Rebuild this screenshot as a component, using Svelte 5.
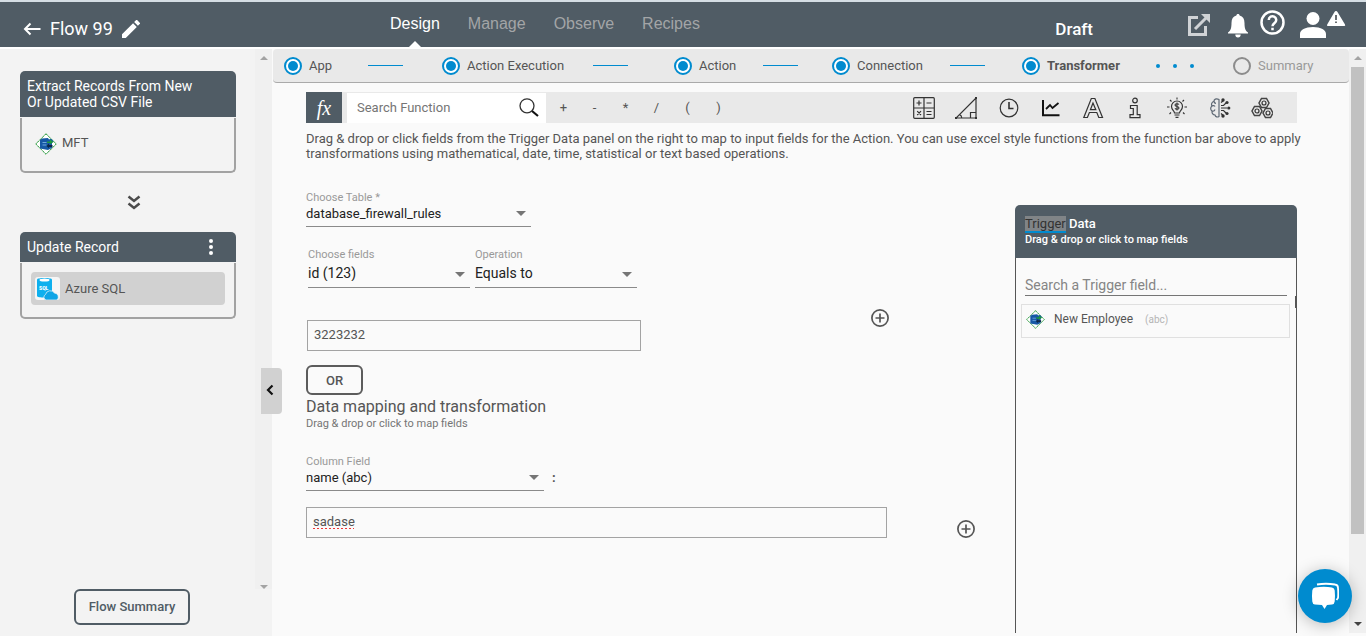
<script lang="ts">
  interface Step {
    label: string;
    state: "done" | "current" | "pending";
  }

  const tabs = ["Design", "Manage", "Observe", "Recipes"];
  const operators = ["+", "-", "*", "/", "(", ")"];
  const functionGroups = ["Math", "Trigonometry", "Date and time", "Statistics", "Text", "Information", "Finance", "Logic", "Engineering"];

  const steps: Step[] = [
    { label: "App", state: "done" },
    { label: "Action Execution", state: "done" },
    { label: "Action", state: "done" },
    { label: "Connection", state: "done" },
    { label: "Transformer", state: "current" },
    { label: "Summary", state: "pending" },
  ];

  let activeTab = $state("Design");
  let functionQuery = $state("");
  let triggerQuery = $state("");
  let table = $state("database_firewall_rules");
  let field = $state("id (123)");
  let operation = $state("Equals to");
  let fieldValue = $state("3223232");
  let column = $state("name (abc)");
  let columnValue = $state("sadase");
</script>

{#snippet mftIcon(size: number)}
  <svg width={size} height={size} viewBox="0 0 22 22" aria-hidden="true">
    <path d="M11 .8 21.2 11 11 21.2.8 11z" fill="#fff" stroke="#7cc587" />
    <path d="M11 .8 21.2 11 11 21.2.8 11z" fill="none" stroke="#3f9f50" stroke-dasharray="2 1.500" />
    <path d="M5 7 7 5.500 13 5l1 1.500 2-.8L18.500 8l-1.500 2v5l-4 2-8-1.500z" fill="#1658a5" />
    <path d="M7.500 9.500h4M7.500 12h4" stroke="#6fa8dd" />
    <path d="M12 8.500h3V6.500L18.500 9 15 11.300V10h-3z" fill="#1f9a3d" />
    <path d="M17.500 12H14v-1.500L11.500 13l2.500 2.200V14h3.500z" fill="#0c2748" />
  </svg>
{/snippet}

{#snippet plusIcon()}
  <svg width="18" height="18" viewBox="0 0 18 18" fill="none" stroke="#555" stroke-width="1.700" aria-hidden="true">
    <circle cx="9" cy="9" r="8.100" />
    <path d="M9 4.500v9M4.500 9h9" />
  </svg>
{/snippet}

{#snippet groupIcon(name: string)}
  <svg width="22" height="22" viewBox="0 0 22 22" fill="none" stroke="#333" stroke-width="1.200" aria-hidden="true">
    {#if name === "Math"}
      <rect x=".7" y=".7" width="20.600" height="20.600" rx="1" />
      <path d="M11 1v20M1 11h20M3.500 6h5M6 3.500v5M13.500 6h5M4.200 14.200l3.800 3.800M8 14.200 4.200 18M13.500 14.500h5M13.500 17.500h5" />
    {:else if name === "Trigonometry"}
      <path d="M21 1v20H1zM15.500 21v-5.500H21M4.500 17.500c1.600.8 2.300 2 2.200 3.500" />
      <path d="M20 0h2v2h-2zM20 20h2v2h-2zM0 20h2v2H0z" fill="#333" stroke="none" />
    {:else if name === "Date and time"}
      <circle cx="11" cy="11" r="8.800" />
      <path d="M11 5v6.500h4.500" stroke-width="1.600" />
    {:else if name === "Statistics"}
      <path d="M3 3v15.200h16.500" stroke="#111" stroke-width="2" />
      <path d="m6 12 4-4 2.500 3 6-5" stroke="#111" stroke-width="1.800" />
    {:else if name === "Text"}
      <path d="M9.300 1.500h3.600L20.500 20.500h-3.700l-2-5H7.400l-2 5H1.800zM11 6l-2.600 6.700h5.400z" />
    {:else if name === "Information"}
      <circle cx="11" cy="3.500" r="2.300" />
      <path d="M6.500 8.500h6.700v9.200H16v3H6v-3h3.300v-6.200H6.500z" />
    {:else if name === "Finance"}
      <path d="M8.500 16c0-2-3-3-3-6.500a5.500 5.500 0 0 1 11 0c0 3.500-3 4.500-3 6.500zM8.500 18h5M9.500 20.300h3" />
      <path d="M13 7.500c-.8-1-4-1-4 .6 0 1.800 4 1 4 2.900 0 1.500-3.200 1.600-4 .4M11 5.500v8M11 .5v2M4 3l1.500 1.500M18 3l-1.500 1.500M1 10h2.500M18.500 10H21M3.500 17 5 15.500M18.500 17 17 15.500" stroke-width="1.100" />
    {:else if name === "Logic"}
      <path d="M10 2.500C7 .8 4.800 2.500 5 4.300 2.500 5 2 7.500 3 9c-2 1.500-1.500 4 0 5-.2 2.500 1 4 3 4 .5 2 2.500 2.500 4 1.500zM5 4.300c.2 1.500 1 2 2 2M3 9c1-.8 2.500-.5 3 .5M3 14c1.500.5 2.500 0 3-1.500" stroke="#5e6874" />
      <path d="M12 8.500h2.500L17 6M12 11h6M12 13.500h2.500L17 16M12 5.500l2-1.500M12 16.500l2 1.800" />
      <g fill="#333" stroke="none">
        <circle cx="14" cy="3" r="1.700" /><circle cx="18" cy="5.500" r="1.600" /><circle cx="19.800" cy="11" r="1.600" />
        <circle cx="18" cy="16.500" r="1.600" /><circle cx="14" cy="19" r="1.700" />
      </g>
    {:else}
      {#each [[13, 6], [6, 14], [17, 16]] as [x, y]}
        <path d="M{x - 2.5} {y - 4.5}h5l2.500 4.500-2.500 4.500h-5l-2.500-4.500z" stroke-width="1.500" stroke="#444" />
        <circle cx={x} cy={y} r="2" />
      {/each}
    {/if}
  </svg>
{/snippet}

{#snippet stepMarker(state: string)}
  <svg width="18" height="18" viewBox="0 0 18 18" aria-hidden="true">
    {#if state === "pending"}
      <circle cx="9" cy="9" r="8" fill="none" stroke="#8c8c8c" stroke-width="2" />
    {:else}
      <circle cx="9" cy="9" r="8" fill="#fff" stroke="#008bcf" stroke-width="2" />
      <circle cx="9" cy="9" r="5" fill="#008bcf" />
    {/if}
  </svg>
{/snippet}

<div class="app">
  <header>
    <div class="title">
      <button aria-label="Back">
        <svg width="18" height="14" viewBox="0 0 18 14" fill="none" stroke="#fff" stroke-width="2"><path d="M17.500 7H2M7.500 1.500 2 7l5.500 5.500" /></svg>
      </button>
      <h1>Flow 99</h1>
      <button aria-label="Rename flow">
        <svg width="18" height="18" viewBox="3 3 18 18" fill="#fff"><path d="M3 17.250V21h3.750L17.810 9.940l-3.750-3.750zM20.710 7.040a1 1 0 0 0 0-1.410l-2.340-2.340a1 1 0 0 0-1.410 0l-1.830 1.830 3.750 3.750z" /></svg>
      </button>
    </div>

    <nav>
      {#each tabs as tab}
        <a href="#{tab.toLowerCase()}" class:active={tab === activeTab} onclick={() => (activeTab = tab)}>{tab}</a>
      {/each}
    </nav>

    <strong class="status">Draft</strong>

    <div class="header-actions">
      <button class="open" aria-label="Open in new window">
        <svg width="22" height="22" viewBox="0 0 22 22" fill="none" stroke="#d0d3d6" stroke-width="3"><path d="M10 3.500H1.500v17h16V12M7 15 18 4" /><path d="M13 0h9v9z" fill="#d0d3d6" stroke="none" /></svg>
      </button>
      <button class="bell" aria-label="Notifications">
        <svg width="20" height="24" viewBox="0 0 20 24" fill="#fff"><path d="M10 0c1 0 1.600.6 1.600 1.600C15 2.500 16.500 5 16.500 9c0 5 .8 7.500 3.500 9.500v1H0v-1C2.700 16.500 3.500 14 3.500 9c0-4 1.500-6.500 4.900-7.400C8.400.6 9 0 10 0zM7.300 20.500h5.400c0 1.800-1 3-2.700 3s-2.700-1.200-2.700-3z" /></svg>
      </button>
      <button class="help" aria-label="Help">
        <svg width="25" height="25" viewBox="0 0 25 25" fill="none" stroke="#fff" stroke-width="2.500"><circle cx="12.500" cy="12.500" r="11" /><path d="M8.800 10a3.700 3.700 0 1 1 6 2.800c-1.400 1.100-2.300 1.700-2.300 3.400M12.500 17.700v2.500" /></svg>
      </button>
      <button class="user" aria-label="Account">
        <svg width="46" height="28" viewBox="0 0 46 28" fill="#fff"><circle cx="13" cy="8.500" r="6.500" /><path d="M0 28v-4c0-4 5-7 13-7s13 3 13 7v4zM36 1q1 0 1.500 1l7.500 12.500q.8 1.500-.8 1.500H28q-1.600 0-.8-1.500L34.500 2q.5-1 1.500-1z" /><path d="M36 5v5M36 11.500v1.500" stroke="#3a3f44" stroke-width="1.500" /></svg>
      </button>
    </div>
  </header>

  <div class="body">
    <aside>
      <div class="flow">
        <div class="flow-list">
          <section class="card">
            <h2><span>Extract Records From New Or Updated CSV File</span></h2>
            <div class="card-body trigger">
              {@render mftIcon(22)}
              <span>MFT</span>
            </div>
          </section>

          <svg class="chevrons" width="14" height="15" viewBox="0 0 14 15" fill="none" stroke="#4b4b4b" stroke-width="2.500" aria-hidden="true"><path d="m1.500 1.500 5.500 4.500 5.500-4.500M1.500 8.500 7 13l5.500-4.500" /></svg>

          <section class="card">
            <h2>
              <span>Update Record</span>
              <button aria-label="Record menu">
                <svg width="4" height="16" viewBox="0 0 4 16" fill="#fff"><circle cx="2" cy="2" r="2" /><circle cx="2" cy="8" r="2" /><circle cx="2" cy="14" r="2" /></svg>
              </button>
            </h2>
            <div class="card-body">
              <button class="connector-item">
                <svg width="25" height="23" viewBox="0 0 25 23" aria-hidden="true">
                  <rect width="25" height="23" rx="3" fill="#f6f6f6" />
                  <path d="M2 2.500C2 .5 17 .5 17 2.500V19c0 2-15 2-15 0z" fill="#0fb0ee" />
                  <ellipse cx="9.500" cy="3" rx="5" ry="1.500" fill="#fff" />
                  <text x="4" y="13" font-size="5" font-weight="900" fill="#fff">SQL</text>
                  <path d="M11 23a3 3 0 0 1-.5-5.500 5 5 0 0 1 9-1.500 4 4 0 0 1 2.500 7z" fill="#0fa5e6" stroke="#f6f6f6" stroke-width=".7" />
                </svg>
                <span>Azure SQL</span>
              </button>
            </div>
          </section>
        </div>
        <div class="scroll-track" aria-hidden="true">
          <span class="arrow up"></span>
          <span class="arrow down"></span>
        </div>
      </div>
      <footer>
        <button class="summary">Flow Summary</button>
      </footer>
      <button class="collapse" aria-label="Collapse panel">
        <svg width="8" height="12" viewBox="0 0 8 12" fill="none" stroke="#111" stroke-width="2.200"><path d="M6.500 1.500 2 6l4.500 4.500" /></svg>
      </button>
    </aside>

    <main>
      <ol class="stepper">
        {#each steps as step, i}
          <li class={step.state}>
            {@render stepMarker(step.state)}
            <span>{step.label}</span>
          </li>
          {#if i < steps.length - 1}
            <li class="link" aria-hidden="true">
              {#if step.state === "current"}
                <i class="dot"></i><i class="dot"></i><i class="dot"></i>
              {:else}
                <i class="line"></i>
              {/if}
            </li>
          {/if}
        {/each}
      </ol>

      <div class="content">
        <div class="function-bar">
          <button class="fx" aria-label="Functions"><i>fx</i></button>
          <label class="function-search">
            <input type="text" placeholder="Search Function" aria-label="Search Function" bind:value={functionQuery} />
            <svg width="20" height="19" viewBox="0 0 20 19" fill="none" stroke="#333" aria-hidden="true"><circle cx="8" cy="7.800" r="7" stroke-width="1.300" /><path d="m13 13 6 5" stroke="#111" stroke-width="2.200" /></svg>
          </label>
          <div class="operators">
            {#each operators as operator}
              <button>{operator}</button>
            {/each}
          </div>
          <div class="groups">
            {#each functionGroups as group}
              <button aria-label={group}>{@render groupIcon(group)}</button>
            {/each}
          </div>
        </div>

        <p class="hint">
          Drag &amp; drop or click fields from the Trigger Data panel on the right to map to input fields for the Action. You can use excel style functions from the function bar above to apply transformations using mathematical, date, time, statistical or text based operations.
        </p>

        <div class="workspace">
          <form>
            <label class="field table-field">
              <span>Choose Table *</span>
              <select bind:value={table}><option>database_firewall_rules</option></select>
            </label>

            <div class="conditions">
              <label class="field large">
                <span>Choose fields</span>
                <select bind:value={field}><option>id (123)</option></select>
              </label>
              <label class="field large">
                <span>Operation</span>
                <select bind:value={operation}><option>Equals to</option></select>
              </label>
            </div>

            <div class="condition-value">
              <input type="text" class="box" aria-label="Field value" bind:value={fieldValue} />
              <button type="button" aria-label="Add condition">{@render plusIcon()}</button>
            </div>

            <button type="button" class="or">OR</button>

            <h3>Data mapping and transformation</h3>
            <p class="sub">Drag &amp; drop or click to map fields</p>

            <div class="column-row">
              <label class="field column-field">
                <span>Column Field</span>
                <select bind:value={column}><option>name (abc)</option></select>
              </label>
              <b>:</b>
            </div>

            <div class="mapping-value">
              <input type="text" class="box misspelled" aria-label="Column value" bind:value={columnValue} />
              <button type="button" aria-label="Add mapping">{@render plusIcon()}</button>
            </div>
          </form>

          <section class="trigger-panel">
            <div class="panel-head">
              <h2><mark>Trigger</mark> Data</h2>
              <p>Drag &amp; drop or click to map fields</p>
            </div>
            <div class="panel-body">
              <input type="text" placeholder="Search a Trigger field..." aria-label="Search a Trigger field" bind:value={triggerQuery} />
              <span class="panel-thumb"></span>
              <button class="trigger-field">
                {@render mftIcon(19)}
                <span>New Employee</span>
                <small>(abc)</small>
              </button>
            </div>
          </section>
        </div>
      </div>
    </main>

    <div class="scroll-track page-scroll" aria-hidden="true">
      <span class="arrow up"></span>
      <span class="thumb"></span>
      <span class="arrow down"></span>
    </div>
  </div>

  <button class="chat" aria-label="Open chat">
    <svg width="28" height="28" viewBox="0 0 28 28" fill="#fff"><path d="M4 5.500q9-1.500 17 0 2.500.3 2.700 3 .6 6 0 11-.3 2.700-2.700 3l-5 .5-2.500 4-2.500-4-7-.5q-2.500-.3-2.700-3-.6-6 0-11 .3-2.700 2.700-3z" /><path d="M6 2.500q9-1.500 18 0 3 .3 3 3.500.5 6 0 10l-1.500 2" fill="none" stroke="#fff" stroke-width="1.800" /></svg>
  </button>
</div>

<style>
  :global(body) {
    margin: 0;
  }

  .app {
    --slate: #505c65;
    --blue: #008bcf;
    display: flex;
    flex-direction: column;
    min-height: 100vh;
    background: #fafafa;
    color: #555;
    font-family: Roboto, sans-serif;
    font-size: 13px;
  }

  .app :global(svg) {
    display: block;
    flex-shrink: 0;
  }

  button,
  input,
  select {
    padding: 0;
    border: 0;
    background: none;
    color: inherit;
    font: inherit;
    outline: none;
  }

  button {
    cursor: pointer;
  }

  h1,
  h2,
  h3,
  p {
    margin: 0;
    font-weight: 400;
  }

  header {
    display: flex;
    height: 45px;
    border-top: 2px solid #d5dee4;
    border-bottom: 2px solid #fff;
    background: var(--slate);
    color: #fff;
  }

  .title {
    display: flex;
    align-items: center;
    gap: 9px;
    width: 367px;
    padding: 9px 0 0 23px;
  }

  h1 {
    font-size: 18px;
    line-height: 20px;
  }

  nav {
    display: flex;
    flex: 1;
    gap: 28px;
    font: 16px/20px "Liberation Sans", Arial, sans-serif;
  }

  nav a {
    position: relative;
    padding-top: 12px;
    color: #a3a5a7;
    text-decoration: none;
  }

  nav a.active {
    color: #fff;
  }

  nav a.active::after {
    content: "";
    position: absolute;
    bottom: 0;
    left: calc(50% - 6px);
    border: 6px solid transparent;
    border-top: 0;
    border-bottom-color: #fff;
  }

  .status {
    margin-right: 95px;
    padding-top: 17px;
    font-size: 17px;
    font-weight: 500;
    line-height: 20px;
  }

  .header-actions {
    display: flex;
    align-items: flex-start;
    padding: 8px 20px 0 0;
  }

  .open {
    margin: 4px 18px 0 0;
  }

  .bell {
    margin: 4px 12px 0 0;
  }

  .help {
    margin-right: 15px;
  }

  .body {
    display: flex;
    flex: 1;
  }

  aside {
    position: relative;
    display: flex;
    flex-direction: column;
    width: 272px;
    flex-shrink: 0;
    background: #f3f3f3;
  }

  .flow {
    display: flex;
    flex: 1;
  }

  .flow-list {
    display: flex;
    flex: 1;
    flex-direction: column;
    padding: 22px 19px 0 20px;
  }

  .card h2 {
    display: flex;
    align-items: center;
    justify-content: space-between;
    padding: 7px 23px 7px 7px;
    border-radius: 5px 5px 0 0;
    background: var(--slate);
    color: #fff;
    font-size: 14px;
    line-height: 16px;
  }

  .card h2 span {
    max-width: 170px;
  }

  .card-body {
    margin-top: 1px;
    padding: 9px;
    padding-bottom: 12px;
    border: 2px solid #a2a2a2;
    border-top: 0;
    border-radius: 0 0 5px 5px;
  }

  .trigger {
    display: flex;
    gap: 5px;
    padding: 15px 13px 16px;
    line-height: 20px;
  }

  .chevrons {
    margin: 22px 0 22px 107px;
  }

  .connector-item {
    display: flex;
    align-items: center;
    gap: 5px;
    width: 100%;
    padding: 5px 4px;
    border-radius: 4px;
    background: #d1d1d1;
  }

  .scroll-track {
    display: flex;
    flex-direction: column;
    align-items: center;
    width: 17px;
    flex-shrink: 0;
    background: #f0f0f0;
  }

  .arrow {
    margin: 7px 0;
    border: 4px solid transparent;
  }

  .arrow.up {
    border-top: 0;
    border-bottom-color: #a3a3a3;
  }

  .arrow.down {
    margin: auto 0 0;
    border-bottom: 0;
    border-top-color: #a3a3a3;
  }

  footer {
    display: flex;
    justify-content: center;
    padding: 0 8px 11px 0;
  }

  .summary {
    padding: 8px 13px;
    border: 2px solid var(--slate);
    border-radius: 6px;
    color: var(--slate);
    font-weight: 500;
    line-height: 16px;
  }

  .collapse {
    position: absolute;
    top: 319px;
    right: -10px;
    display: flex;
    align-items: center;
    width: 21px;
    height: 46px;
    padding: 0 5px 2px;
    border-radius: 0 4px 4px 0;
    background: #d1d1d1;
  }

  main {
    display: flex;
    flex: 1;
    flex-direction: column;
    min-width: 0;
    padding-left: 1px;
  }

  .stepper {
    display: grid;
    grid-template-columns: 84fr 74fr 151fr 81fr 89fr 69fr 118fr 72fr 134fr 77fr 116fr;
    align-items: center;
    height: 33px;
    margin: 0;
    padding: 0 0 0 11px;
    border-bottom: 1px solid #aaa;
    border-radius: 4px;
    background: #e9e9e9;
    list-style: none;
  }

  .stepper li {
    display: flex;
    align-items: center;
    gap: 7px;
    white-space: nowrap;
  }

  .stepper .current {
    font-weight: 700;
  }

  .stepper .pending {
    color: #999;
  }

  .stepper .link {
    gap: 13px;
  }

  .line {
    width: 35px;
    border-top: 1px solid var(--blue);
  }

  .dot {
    width: 4px;
    height: 4px;
    border-radius: 50%;
    background: var(--blue);
  }

  .content {
    display: flex;
    flex: 1;
    flex-direction: column;
    padding: 9px 52px 3px 33px;
  }

  .function-bar {
    display: flex;
    height: 31px;
    background: #e9e9e9;
  }

  .fx {
    width: 36px;
    margin-right: 5px;
    background: var(--slate);
    color: #fff;
    font: 20px/28px "Liberation Serif", serif;
  }

  .function-search {
    display: flex;
    align-items: center;
    width: 199px;
    margin-top: 1px;
    background: #fff;
  }

  .function-search input {
    flex: 1;
    min-width: 0;
    padding: 0 0 2px 10px;
  }

  .function-search svg {
    margin: 0 7px 2px 0;
  }

  input::placeholder {
    color: #757575;
    opacity: 1;
  }

  .operators {
    display: flex;
    margin-left: 2px;
  }

  .operators button {
    width: 31px;
  }

  .groups {
    display: flex;
    width: 380px;
    margin: 0 14px 0 auto;
  }

  .groups button {
    display: grid;
    flex: 1;
    place-items: center;
  }

  /* runs slightly past the function bar */
  .hint {
    margin: 8px -12px 0 0;
    line-height: 15px;
  }

  .workspace {
    display: flex;
    flex: 1;
    align-items: stretch;
    margin-top: 31px;
  }

  form {
    flex: 1;
    min-width: 0;
  }

  .field {
    position: relative;
    display: block;
  }

  .field span {
    display: block;
    color: #999;
    font-size: 11px;
    line-height: 12px;
  }

  .field select {
    display: block;
    width: 100%;
    height: 23px;
    padding: 0 0 4px;
    border-bottom: 1px solid #8a8a8a;
    border-radius: 0;
    color: #222;
    appearance: none;
  }

  .field::after {
    content: "";
    position: absolute;
    right: 5px;
    bottom: 11px;
    border: 5px solid transparent;
    border-top-color: #757575;
    border-bottom: 0;
    pointer-events: none;
  }

  .table-field {
    width: 225px;
  }

  .conditions {
    display: flex;
    gap: 5px;
    margin: 22px 0 0 2px;
  }

  .field.large {
    width: 162px;
  }

  .large select {
    height: 27px;
    padding-bottom: 2px;
    font-size: 14px;
  }

  .box {
    box-sizing: border-box;
    height: 31px;
    padding: 0 6px 2px;
    border: 1px solid #a3a3a3;
  }

  .condition-value {
    display: flex;
    align-items: flex-start;
    justify-content: space-between;
    margin: 21px 126px 0 1px;
  }

  .condition-value .box {
    width: 334px;
    margin-top: 11px;
  }

  .or {
    display: block;
    margin-top: 14px;
    padding: 6px 18px 4px;
    border: 2px solid #5c5c5c;
    border-radius: 6px;
    font-weight: 500;
    line-height: 16px;
  }

  h3 {
    margin-top: 2px;
    font-size: 16px;
    line-height: 20px;
  }

  .sub {
    color: #757575;
    font-size: 11px;
    line-height: 14px;
  }

  .column-row {
    display: flex;
    gap: 8px;
    align-items: flex-end;
    margin-top: 25px;
  }

  .column-field {
    width: 238px;
  }

  .column-row b {
    font-weight: 700;
    line-height: 26px;
  }

  .mapping-value {
    display: flex;
    align-items: flex-end;
    gap: 70px;
    margin: 16px 40px 0 0;
  }

  .mapping-value .box {
    flex: 1;
    min-width: 0;
  }

  .misspelled {
    text-decoration: underline dotted #e33 2px;
    text-underline-offset: 2px;
  }

  .trigger-panel {
    display: flex;
    flex-direction: column;
    width: 282px;
    flex-shrink: 0;
    margin-top: 13px;
  }

  .panel-head {
    padding: 10px;
    border-radius: 5px 5px 0 0;
    background: var(--slate);
    color: #fff;
  }

  .panel-head h2 {
    font-size: 13px;
    font-weight: 500;
    line-height: 17px;
  }

  .panel-head p {
    font-size: 11px;
    font-weight: 500;
    line-height: 16px;
  }

  mark {
    border-bottom: 2px solid var(--blue);
    background: #808487;
    color: #333;
    font-weight: 400;
  }

  .panel-body {
    position: relative;
    flex: 1;
    padding: 16px 6px 0 5px;
    border: 1px solid #555;
    border-width: 0 1px;
  }

  .panel-body input {
    display: block;
    box-sizing: border-box;
    width: calc(100% - 7px);
    height: 22px;
    margin-left: 4px;
    border-bottom: 1px solid #757575;
    font-size: 14px;
  }

  .panel-body input::placeholder {
    color: #858585;
  }

  .panel-thumb {
    position: absolute;
    top: 38px;
    right: -1px;
    width: 2px;
    height: 12px;
    background: #555;
  }

  .trigger-field {
    display: flex;
    align-items: center;
    width: 100%;
    height: 34px;
    margin-top: 8px;
    padding: 0 4px 4px;
    border: 1px solid #e0e0e0;
  }

  .trigger-field span {
    margin: 0 12px 0 9px;
    font-size: 12px;
  }

  .trigger-field small {
    color: #b5b5b5;
    font-size: 10px;
  }

  .page-scroll {
    margin-bottom: 3px;
  }

  .thumb {
    width: 13px;
    flex: 0 0 80%;
    background: #c1c1c1;
  }

  .page-scroll .down {
    margin-bottom: 7px;
    border-top-color: #444;
  }

  .chat {
    position: fixed;
    right: 14px;
    bottom: 13px;
    display: grid;
    place-items: center;
    width: 54px;
    height: 54px;
    border-radius: 50%;
    background: var(--blue);
    box-shadow: 0 2px 16px rgba(0, 0, 0, 0.25);
  }
</style>
